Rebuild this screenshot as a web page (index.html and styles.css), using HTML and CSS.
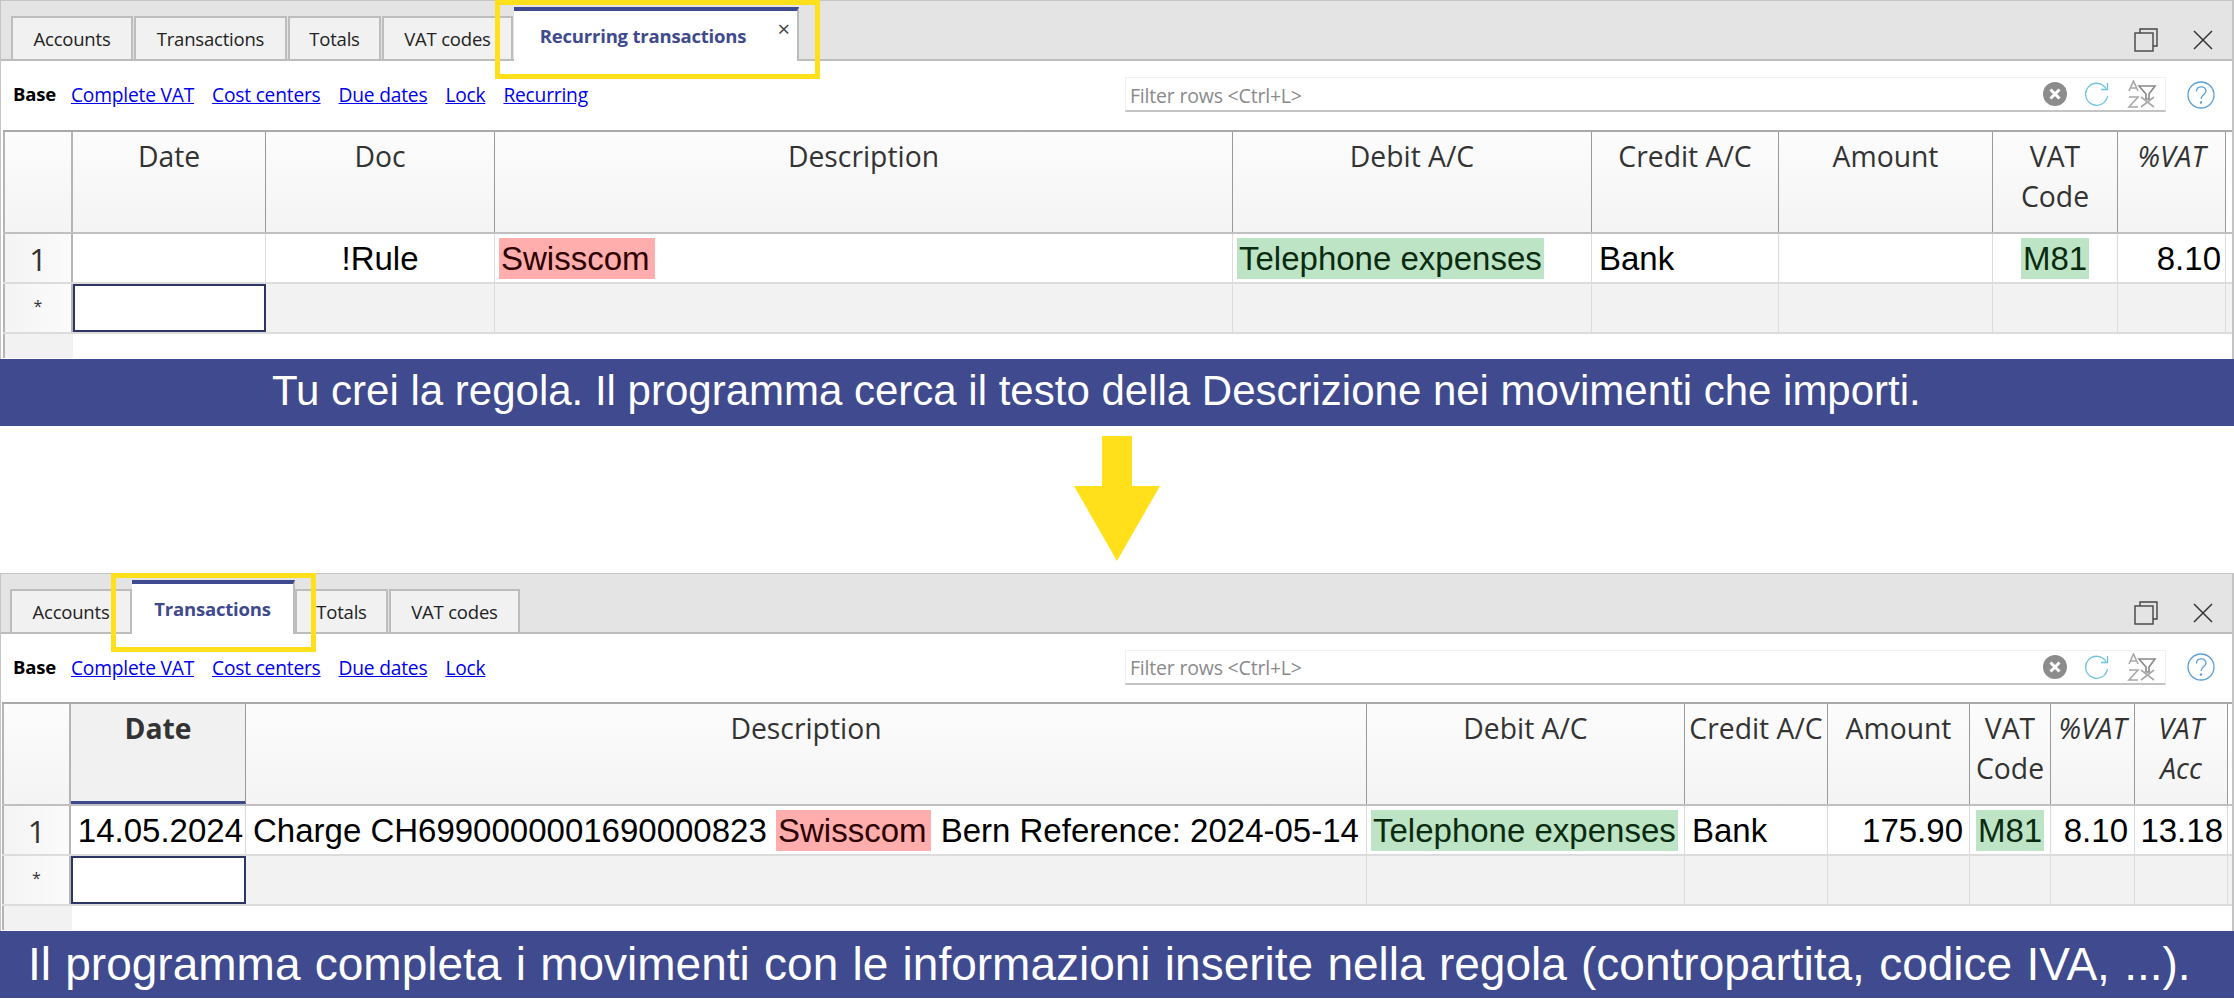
FILE: index.html
```html
<!DOCTYPE html>
<html lang="it">
<head>
<meta charset="UTF-8" />
<title>Regole movimenti ricorrenti</title>
<link rel="stylesheet" href="styles.css">
</head>
<body>

<!-- Tabella Recurring transactions -->
<section class="panel panel-rules">
  <div class="tabbar">
    <div class="tab tab-accounts">Accounts</div>
    <div class="tab tab-transactions">Transactions</div>
    <div class="tab tab-totals">Totals</div>
    <div class="tab tab-vat">VAT codes</div>
    <div class="tab tab-active tab-recurring">Recurring transactions<span class="tab-close">×</span></div>
    <div class="window-icons">
      <svg width="24" height="24" viewBox="0 0 24 24" fill="none" stroke="#444" stroke-width="1.4"><path d="M6 5V1h17v17h-4"/><rect x="1" y="5" width="18" height="18"/></svg>
      <svg width="20" height="20" viewBox="0 0 20 20" fill="none" stroke="#333" stroke-width="1.5"><path d="M1 1l18 18M19 1L1 19"/></svg>
    </div>
  </div>
  <div class="toolbar">
    <nav class="views">
      <b>Base</b>
      <a href="#">Complete VAT</a>
      <a href="#">Cost centers</a>
      <a href="#">Due dates</a>
      <a href="#">Lock</a>
      <a href="#">Recurring</a>
    </nav>
    <div class="filter">
      <span class="filter-text">Filter rows &lt;Ctrl+L&gt;</span>
      <svg class="ico-clear" width="24" height="24" viewBox="0 0 24 24"><circle cx="12" cy="12" r="12" fill="#8c8c8c"/><path d="M7.5 7.5l9 9M16.500 7.500l-9 9" stroke="#fff" stroke-width="3"/></svg>
      <svg class="ico-reload" width="24" height="24" viewBox="0 0 24 24" fill="none" stroke="#6cc3dc" stroke-width="1.300"><path d="M21 6.500A11 11 0 1 0 22.500 14M22.500 1v6.500H16"/></svg>
      <svg class="ico-sort" width="30" height="28" viewBox="0 0 30 28" fill="none" stroke="#a8a8a8" stroke-width="1.600"><path d="M2 11L6.500 1 11 11M3.500 8h6M2 17h9L2 27h9"/><path d="M12 6h16l-6 8v5h-3v-5z" stroke="#888"/><path d="M14 17l13 10M27 17L14 27"/></svg>
    </div>
    <svg class="ico-help" width="28" height="28" viewBox="0 0 28 28" fill="none" stroke="#5b9fd8" stroke-width="1.300"><circle cx="14" cy="14" r="13"/><path d="M9.500 10.500c0-6 9.500-6 9.500-.5 0 3.500-5 3.500-5 8"/><circle cx="14" cy="21.500" r=".6"/></svg>
  </div>
  <div class="grid">
    <div class="row row-head">
      <div class="cell num"></div>
      <div class="cell">Date</div>
      <div class="cell">Doc</div>
      <div class="cell">Description</div>
      <div class="cell">Debit A/C</div>
      <div class="cell">Credit A/C</div>
      <div class="cell">Amount</div>
      <div class="cell">VAT<br>Code</div>
      <div class="cell italic">%VAT</div>
    </div>
    <div class="row row-data">
      <div class="cell num">1</div>
      <div class="cell"></div>
      <div class="cell center">!Rule</div>
      <div class="cell"><span class="red">Swisscom</span></div>
      <div class="cell"><span class="green">Telephone expenses</span></div>
      <div class="cell text">Bank</div>
      <div class="cell"></div>
      <div class="cell center"><span class="green">M81</span></div>
      <div class="cell right">8.10</div>
    </div>
    <div class="row row-new">
      <div class="cell num star">*</div>
      <div class="cell current"></div>
      <div class="cell"></div>
      <div class="cell"></div>
      <div class="cell"></div>
      <div class="cell"></div>
      <div class="cell"></div>
      <div class="cell"></div>
      <div class="cell"></div>
    </div>
    <div class="grid-foot"></div>
  </div>
  <div class="mark mark-recurring"></div>
</section>
<div class="band band-first">Tu crei la regola. Il programma cerca il testo della Descrizione nei movimenti che importi.</div>

<div class="arrow-wrap">
  <svg width="86" height="125" viewBox="0 0 86 125"><path d="M28 0h30v50h28L43 125 0 50h28z" fill="#ffe01b"/></svg>
</div>

<!-- Tabella Transactions -->
<section class="panel panel-trans">
  <div class="tabbar">
    <div class="tab tab-accounts">Accounts</div>
    <div class="tab tab-active tab-transactions">Transactions</div>
    <div class="tab tab-totals">Totals</div>
    <div class="tab tab-vat">VAT codes</div>
    <div class="window-icons">
      <svg width="24" height="24" viewBox="0 0 24 24" fill="none" stroke="#444" stroke-width="1.4"><path d="M6 5V1h17v17h-4"/><rect x="1" y="5" width="18" height="18"/></svg>
      <svg width="20" height="20" viewBox="0 0 20 20" fill="none" stroke="#333" stroke-width="1.5"><path d="M1 1l18 18M19 1L1 19"/></svg>
    </div>
  </div>
  <div class="toolbar">
    <nav class="views">
      <b>Base</b>
      <a href="#">Complete VAT</a>
      <a href="#">Cost centers</a>
      <a href="#">Due dates</a>
      <a href="#">Lock</a>
    </nav>
    <div class="filter">
      <span class="filter-text">Filter rows &lt;Ctrl+L&gt;</span>
      <svg class="ico-clear" width="24" height="24" viewBox="0 0 24 24"><circle cx="12" cy="12" r="12" fill="#8c8c8c"/><path d="M7.5 7.5l9 9M16.500 7.500l-9 9" stroke="#fff" stroke-width="3"/></svg>
      <svg class="ico-reload" width="24" height="24" viewBox="0 0 24 24" fill="none" stroke="#6cc3dc" stroke-width="1.300"><path d="M21 6.500A11 11 0 1 0 22.500 14M22.500 1v6.500H16"/></svg>
      <svg class="ico-sort" width="30" height="28" viewBox="0 0 30 28" fill="none" stroke="#a8a8a8" stroke-width="1.600"><path d="M2 11L6.500 1 11 11M3.500 8h6M2 17h9L2 27h9"/><path d="M12 6h16l-6 8v5h-3v-5z" stroke="#888"/><path d="M14 17l13 10M27 17L14 27"/></svg>
    </div>
    <svg class="ico-help" width="28" height="28" viewBox="0 0 28 28" fill="none" stroke="#5b9fd8" stroke-width="1.300"><circle cx="14" cy="14" r="13"/><path d="M9.500 10.500c0-6 9.500-6 9.500-.5 0 3.500-5 3.500-5 8"/><circle cx="14" cy="21.500" r=".6"/></svg>
  </div>
  <div class="grid">
    <div class="row row-head">
      <div class="cell num"></div>
      <div class="cell sorted">Date</div>
      <div class="cell">Description</div>
      <div class="cell">Debit A/C</div>
      <div class="cell">Credit A/C</div>
      <div class="cell">Amount</div>
      <div class="cell">VAT<br>Code</div>
      <div class="cell italic">%VAT</div>
      <div class="cell italic">VAT<br>Acc</div>
    </div>
    <div class="row row-data">
      <div class="cell num">1</div>
      <div class="cell right tight">14.05.2024</div>
      <div class="cell text">Charge CH6990000001690000823 <span class="red">Swisscom</span> Bern Reference: 2024-05-14</div>
      <div class="cell"><span class="green">Telephone expenses</span></div>
      <div class="cell text">Bank</div>
      <div class="cell right">175.90</div>
      <div class="cell center"><span class="green">M81</span></div>
      <div class="cell right">8.10</div>
      <div class="cell right">13.18</div>
    </div>
    <div class="row row-new">
      <div class="cell num star">*</div>
      <div class="cell current"></div>
      <div class="cell"></div>
      <div class="cell"></div>
      <div class="cell"></div>
      <div class="cell"></div>
      <div class="cell"></div>
      <div class="cell"></div>
      <div class="cell"></div>
    </div>
    <div class="grid-foot"></div>
  </div>
  <div class="mark mark-transactions"></div>
</section>
<div class="band band-second">Il programma completa i movimenti con le informazioni inserite nella regola (contropartita, codice IVA, ...).</div>

</body>
</html>
```

FILE: styles.css
```css
* {
  box-sizing: border-box;
}
body {
  margin: 0;
  background: #fff;
  color: #000;
  font-family: "Liberation Sans", Arial, sans-serif;
  overflow: hidden;
}

/* pannello */
.panel {
  position: relative;
  height: 359px;
  border: 1px solid #c4c4c4;
  border-width: 1px 2px 0 1px;
}
.panel-trans {
  height: 358px;
}

/* linguette */
.tabbar {
  display: flex;
  align-items: flex-end;
  height: 60px;
  padding-left: 10px;
  background: #e4e4e4;
  border-bottom: 2px solid #bdbdbd;
}
.tab {
  height: 45px;
  margin-bottom: -2px;
  margin-right: 1px;
  padding-top: 8px;
  text-align: center;
  background: #f1f1f1;
  border: 2px solid #bdbdbd;
  font-family: "Open Sans", sans-serif;
  font-size: 18.5px;
  letter-spacing: -0.2px;
  color: #222;
}
.tab-accounts { width: 122px; }
.tab-transactions { width: 153px; }
.tab-totals { width: 93px; }
.tab-vat { width: 131px; }
.tab-active {
  position: relative;
  height: 54px;
  padding-top: 12px;
  background: #fff;
  border: 0;
  border-top: 4px solid #3f4a8e;
  border-right: 2px solid #bdbdbd;
  font-weight: 700;
  color: #3f4a8e;
}
.tab-recurring {
  width: 285px;
  padding-right: 25px;
}
.panel-trans .tabbar {
  padding-left: 9px;
}
.panel-trans .tab-accounts {
  margin-right: 0;
}
.panel-trans .tab-transactions {
  width: 163px;
  margin-right: 0;
}
.tab-close {
  position: absolute;
  top: 6px;
  right: 7px;
  font-weight: 400;
  font-size: 22px;
  line-height: 22px;
  color: #444;
}
.window-icons {
  display: flex;
  align-items: center;
  gap: 35px;
  margin-left: auto;
  padding: 0 19px 7px 0;
}

/* barra viste + filtro */
.toolbar {
  display: flex;
  align-items: center;
  height: 69px;
  padding: 0 10px 2px 12px;
  font-family: "Open Sans", sans-serif;
  font-size: 19.2px;
}
.panel-trans .toolbar {
  height: 68px;
}
.views {
  display: flex;
  gap: 18px;
  width: 1112px;
  letter-spacing: -0.2px;
}
.views b {
  margin-right: -3px;
  font-size: 18.5px;
}
.views a {
  color: #0000ee;
}
.filter {
  display: flex;
  align-items: center;
  width: 1041px;
  height: 35px;
  padding: 0 8px 0 4px;
  background: #fff;
  border: 1px solid #f0f0f0;
  border-bottom: 2px solid #c4c4c4;
  color: #8a8a8a;
}
.filter-text {
  flex: 1;
  padding-top: 2px;
  font-size: 19.5px;
  letter-spacing: -0.2px;
}
.ico-clear,
.ico-reload {
  margin-right: 18px;
}
.ico-help {
  margin-left: 21px;
}

/* griglia */
.grid {
  margin-left: 2px;
  border-top: 2px solid #a9a9a9;
}
.panel-trans .grid {
  margin-left: 1px;
}
.row {
  display: grid;
}
.panel-rules .row {
  grid-template-columns: 70px 193px 229px 738px 359px 187px 214px 125px 108px;
}
.panel-trans .row {
  grid-template-columns: 69px 175px 1121px 318px 143px 142px 81px 84px 93px;
}
.cell {
  overflow: hidden;
  border-right: 1px solid #dcdcdc;
  white-space: nowrap;
}
.num {
  text-align: center;
  background: linear-gradient(90deg, #f5f4f4, #fbfbfb);
  border-right: 2px solid #b5b5b5;
  border-left: 2px solid #b5b5b5;
  font-family: "Open Sans", sans-serif;
  font-size: 31px;
  color: #333;
}
.row-head {
  height: 102px;
  border-bottom: 2px solid #c0c0c0;
}
.row-head .cell {
  padding-top: 4px;
  text-align: center;
  background: linear-gradient(#fcfcfc, #f5f4f4);
  border-right: 1px solid #9a9a9a;
  font-family: "Open Sans", sans-serif;
  font-size: 28.3px;
  line-height: 40px;
  color: #333;
}
.row-head .num {
  border-right: 2px solid #b5b5b5;
}
.row-head .italic {
  font-style: italic;
}
.row-head .sorted {
  background: #f1f1f1;
  border-bottom: 3px solid #3f4a8e;
  font-weight: 700;
}
.row-data {
  height: 50px;
  border-bottom: 2px solid #dcdcdc;
  font-size: 33px;
  line-height: 41px;
}
.row-data .cell {
  padding: 4px 0 0 4px;
}
.row-data .text {
  padding-left: 7px;
}
.row-data .center {
  padding-left: 0;
}
.row-data .right {
  padding-right: 6px;
}
.row-data .tight {
  padding-right: 2px;
}
.row-data .cell:last-child {
  padding-right: 4px;
}
.row-data .num {
  padding: 0;
  line-height: 50px;
}
.row-new {
  height: 50px;
  background: #f2f2f2;
  border-bottom: 2px solid #dcdcdc;
}
.row-new .star {
  font-size: 16px;
  line-height: 44px;
}
.current {
  background: #fff;
  border: 2px solid #2c3566;
}
.center { text-align: center; }
.right { text-align: right; }
.red {
  display: inline-block;
  padding: 0 5px 0 2px;
  background: #ffadad;
  color: #2b0000;
}
.green {
  display: inline-block;
  padding: 0 2px;
  background: #bde4c4;
  color: #0b2b11;
}
.grid-foot {
  width: 70px;
  height: 24px;
  background: #f2f2f2;
  border-left: 2px solid #b5b5b5;
}

/* riquadri gialli */
.mark {
  position: absolute;
  border: 5px solid #ffe01b;
  pointer-events: none;
}
.mark-recurring {
  left: 494px;
  top: -1px;
  width: 325px;
  height: 79px;
}
.mark-transactions {
  left: 110px;
  top: -1px;
  width: 205px;
  height: 79px;
}

/* fasce blu */
.band {
  height: 67px;
  background: #404a8e;
  color: #fff;
  font-size: 42px;
  line-height: 64px;
  white-space: nowrap;
}
.band-first {
  padding-left: 272px;
}
.band-second {
  padding-left: 28px;
  font-size: 46px;
  line-height: 67px;
  word-spacing: 1.5px;
}
.arrow-wrap {
  display: flex;
  justify-content: center;
  height: 147px;
  padding-top: 10px;
}
```
